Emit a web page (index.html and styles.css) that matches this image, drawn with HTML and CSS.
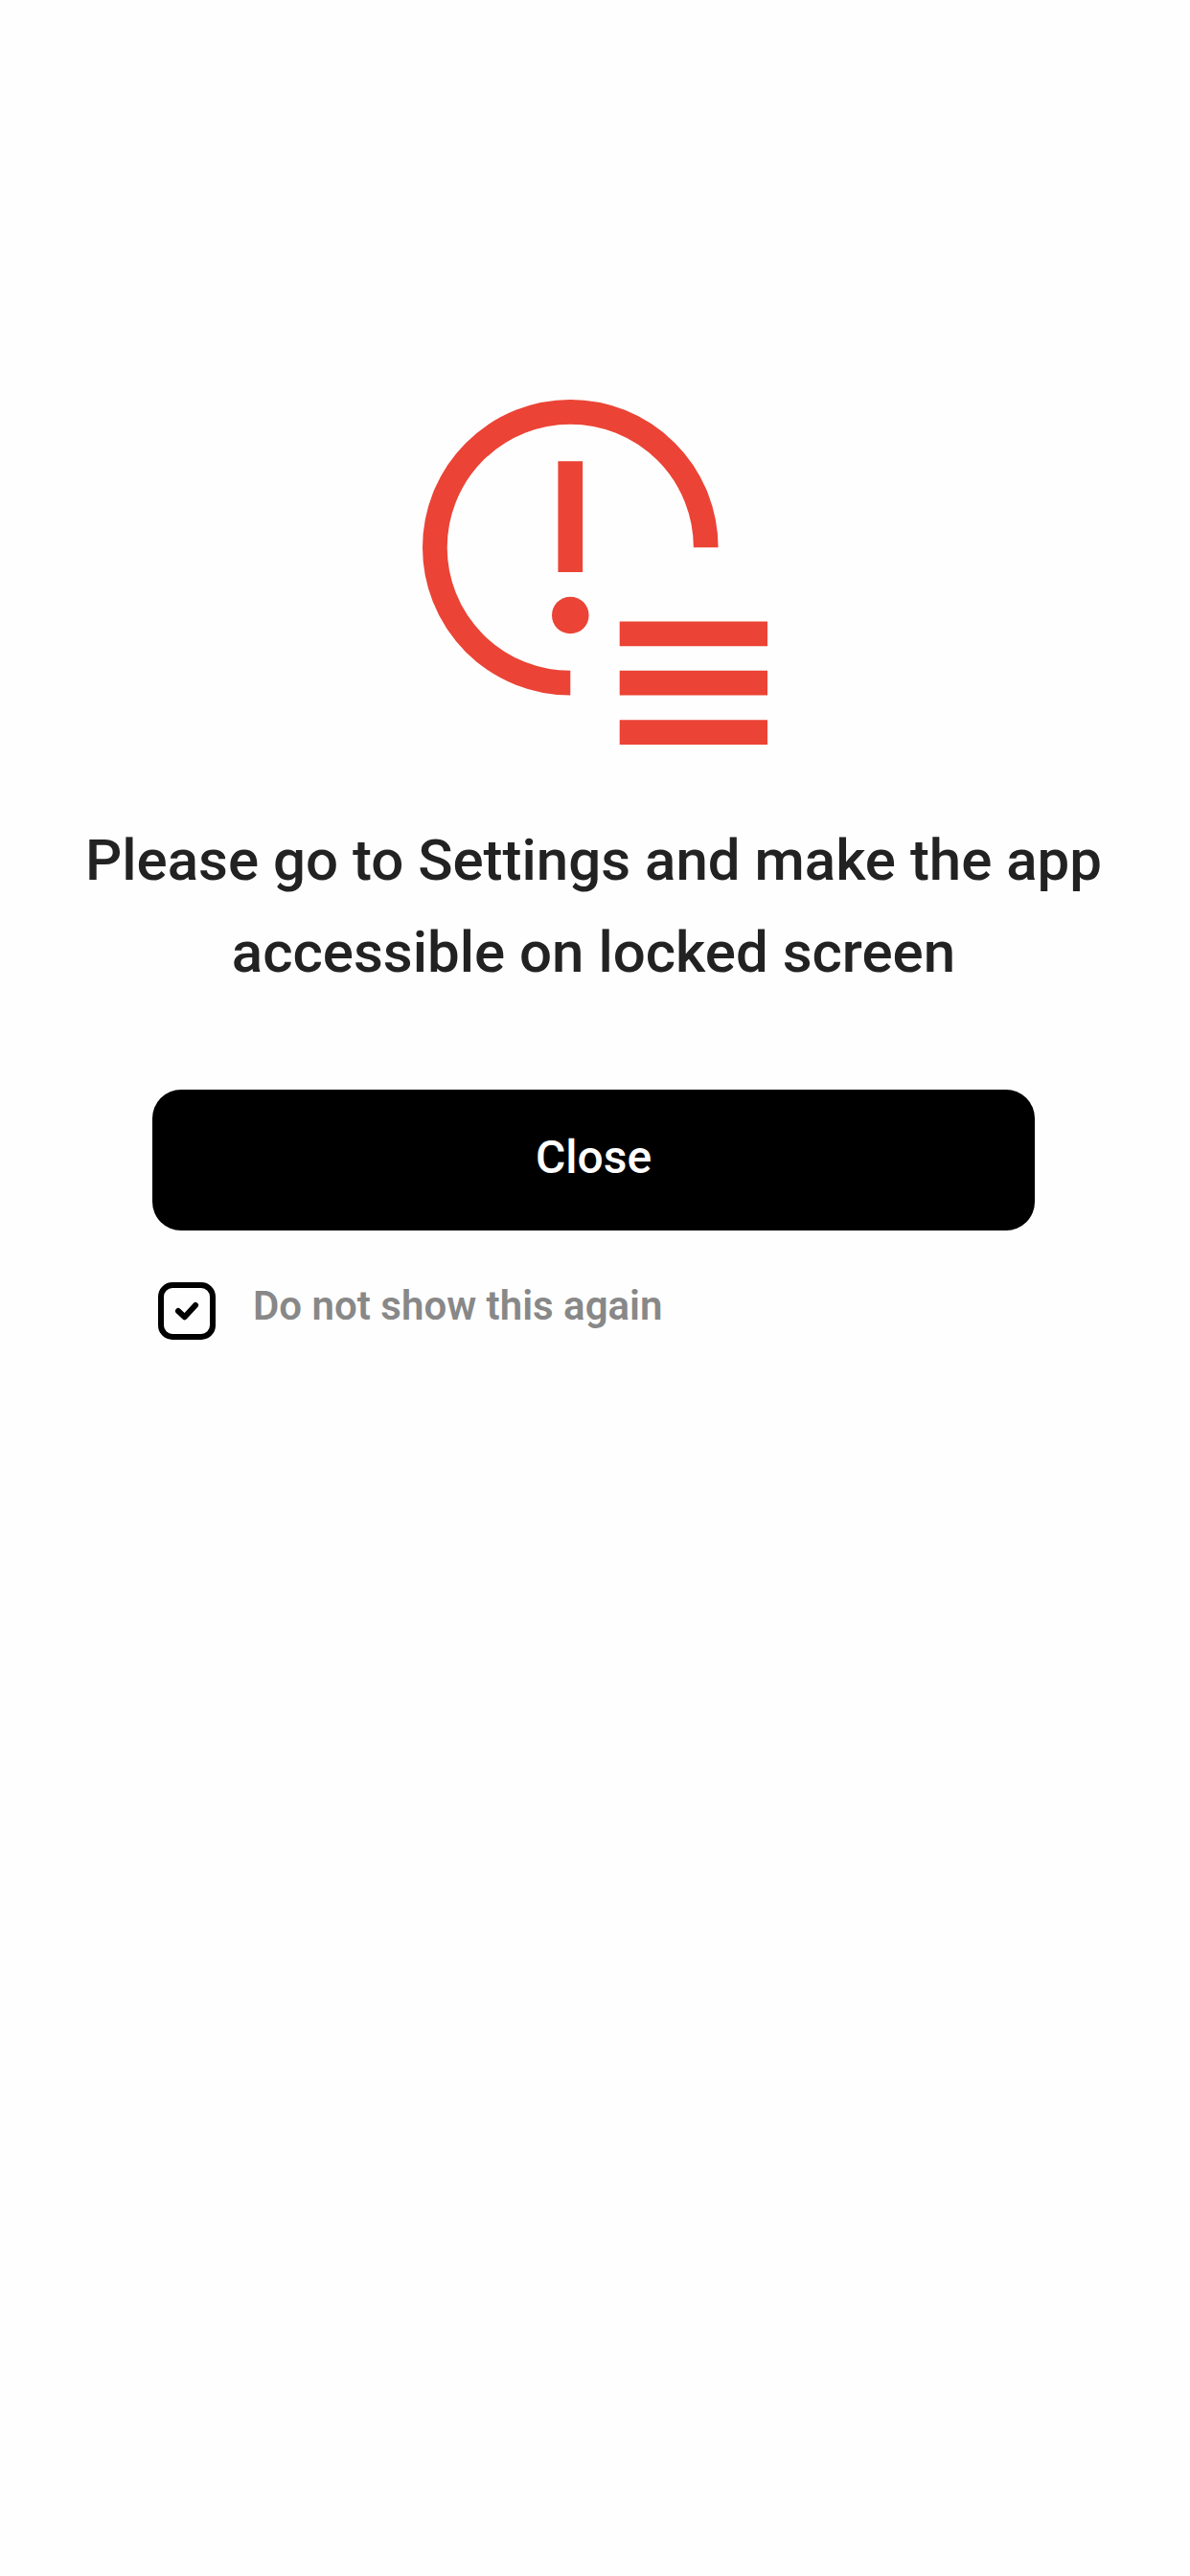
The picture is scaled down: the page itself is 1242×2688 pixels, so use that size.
FILE: index.html
```html
<!DOCTYPE html>
<html lang="en">
<head>
<meta charset="utf-8">
<title>Locked screen access</title>
<link rel="stylesheet" href="styles.css">
</head>
<body>
<main class="screen">
  <svg class="alert-icon" viewBox="0 0 28 28" aria-hidden="true">
    <path d="M12 23A11 11 0 1 1 23 12" fill="none" stroke="currentColor" stroke-width="2"/>
    <path d="M11 5h2v9h-2zM16 18h12v2H16zM16 22h12v2H16zM16 26h12v2H16z" fill="currentColor"/>
    <circle cx="12" cy="17.5" r="1.5" fill="currentColor"/>
  </svg>
  <h1 class="title">Please go to Settings and make the app<br>accessible on locked screen</h1>
  <div class="actions">
    <button class="close" type="button">Close</button>
    <label class="option">
      <svg class="checkbox" viewBox="0 0 60 60" aria-hidden="true">
        <rect x="3" y="3" width="54" height="54" rx="12"/>
        <path d="M21 30l6.7 6.2L39 24"/>
      </svg>
      <span class="option-text">Do not show this again</span>
    </label>
  </div>
</main>
</body>
</html>
```
FILE: styles.css
```css
body {
  margin: 0;
  background: #fefefe;
  font-family: Roboto, "Liberation Sans", sans-serif;
}

.screen {
  box-sizing: border-box;
  min-height: 2688px;
  padding-top: 417px;
  display: flex;
  flex-direction: column;
  align-items: center;
}

.alert-icon {
  width: 360px;
  height: 360px;
  color: #eb4335;
}

.title {
  margin: 73px 3px 0 0;
  font-size: 60px;
  line-height: 96px;
  font-weight: 500;
  text-align: center;
  white-space: nowrap;
  color: #222;
}

.actions {
  width: 921px;
  margin: 95px 3px 0 0;
  display: flex;
  flex-direction: column;
}

.close {
  box-sizing: border-box;
  height: 147px;
  padding: 0 0 6px;
  border: 0;
  border-radius: 30px;
  background: #000;
  color: #fff;
  font: 500 48px/56px Roboto, "Liberation Sans", sans-serif;
}

.option {
  display: flex;
  align-items: flex-start;
  gap: 39px;
  margin-top: 54px;
  padding-left: 6px;
}

.checkbox {
  width: 60px;
  height: 60px;
  fill: none;
  stroke: #000;
  stroke-width: 6;
  stroke-linecap: round;
  stroke-linejoin: round;
}

.option-text {
  font-size: 42px;
  line-height: 49px;
  font-weight: 600;
  color: #888;
}
```
